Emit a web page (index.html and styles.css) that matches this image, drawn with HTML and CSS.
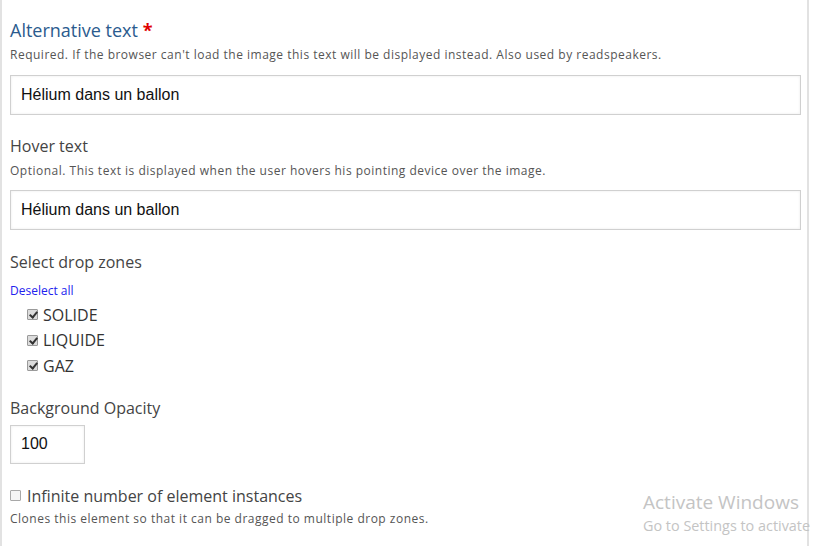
FILE: index.html
```html
<!DOCTYPE html>
<html lang="en">
<head>
    <meta charset="UTF-8">
    <title>Drag and drop element</title>
    <link rel="stylesheet" href="styles.css">
</head>
<body>
<div class="editor-panel">
    <div class="field">
        <label class="field-label required" for="altText">Alternative text <span class="star">*</span></label>
        <div class="field-desc">Required. If the browser can't load the image this text will be displayed instead. Also used by readspeakers.</div>
        <input class="text-input" type="text" id="altText" value="Hélium dans un ballon">
    </div>

    <div class="field">
        <label class="field-label" for="hoverText">Hover text</label>
        <div class="field-desc">Optional. This text is displayed when the user hovers his pointing device over the image.</div>
        <input class="text-input" type="text" id="hoverText" value="Hélium dans un ballon">
    </div>

    <div class="field field-zones">
        <div class="field-label">Select drop zones</div>
        <a class="deselect" href="#">Deselect all</a>
        <ul class="zone-list">
            <li><span class="check checked"></span>SOLIDE</li>
            <li><span class="check checked"></span>LIQUIDE</li>
            <li><span class="check checked"></span>GAZ</li>
        </ul>
    </div>

    <div class="field field-opacity">
        <label class="field-label" for="opacity">Background Opacity</label>
        <input class="text-input small" type="text" id="opacity" value="100">
    </div>

    <div class="field field-multiple">
        <div class="field-label"><span class="check"></span>Infinite number of element instances</div>
        <div class="field-desc">Clones this element so that it can be dragged to multiple drop zones.</div>
    </div>
</div>

<div class="activate">
    <div class="activate-title">Activate Windows</div>
    <div class="activate-sub">Go to Settings to activate</div>
</div>
</body>
</html>
```

FILE: styles.css
```css
html, body {
    margin: 0;
    height: 100%;
    background-color: #fff;
    overflow: hidden;
}

body {
    font-family: "Open Sans", sans-serif;
    color: #444;
    position: relative;
}

.editor-panel {
    width: 787px;
    height: 546px;
    border-left: 2px solid #e2e2e2;
    border-right: 2px solid #e2e2e2;
    padding: 18px 10px 0 8px;
    box-sizing: content-box;
}

.field {
    margin-bottom: 20px;
}

.field-label {
    display: block;
    font-size: 16px;
    line-height: 22px;
    color: #444;
}

.field-label.required {
    font-size: 18px;
    line-height: 24px;
    color: #2b5b8e;
}

.star {
    color: #e00000;
    font-weight: bold;
}

.field-desc {
    font-size: 12px;
    line-height: 18px;
    letter-spacing: 0.5px;
    color: #555;
    margin-top: 4px;
}

.text-input {
    display: block;
    width: 791px;
    height: 40px;
    box-sizing: border-box;
    margin-top: 11px;
    padding: 0 10px;
    border: 1px solid #d0d0d0;
    box-shadow: inset 0 0 3px #ececec;
    font-family: "Liberation Sans", Arial, sans-serif;
    font-size: 16px;
    color: #111;
    background: #fff;
}

.field:nth-child(2) .field-desc {
    margin-top: 5px;
}

.field:nth-child(2) .text-input {
    margin-top: 10px;
}

.field-zones {
    margin-top: 21px;
    margin-bottom: 0;
}

.deselect {
    display: block;
    margin-top: 9px;
    font-size: 12px;
    line-height: 18px;
    color: #2222ee;
    text-decoration: none;
}

.zone-list {
    list-style: none;
    margin: 2px 0 0 0;
    padding: 0 0 0 17px;
}

.zone-list li {
    display: flex;
    align-items: center;
    height: 25.5px;
    font-size: 16px;
    color: #333;
}

.check {
    display: inline-block;
    width: 11px;
    height: 11px;
    box-sizing: border-box;
    border: 1px solid #a8a8a8;
    border-radius: 1px;
    background: #f4f4f4;
    margin-right: 5px;
    flex-shrink: 0;
    position: relative;
}

.check.checked {
    background: #dcdcdc;
    border-color: #9a9a9a;
}

.check.checked::after {
    content: "";
    position: absolute;
    left: 3px;
    top: 0;
    width: 3px;
    height: 6px;
    border-right: 2px solid #333;
    border-bottom: 2px solid #333;
    transform: rotate(40deg);
}

.field-opacity {
    margin-top: 18px;
    margin-bottom: 21px;
}

.field-opacity .text-input {
    width: 75px;
    height: 39px;
    margin-top: 6px;
}

.field-multiple .field-label {
    display: flex;
    align-items: center;
}

.field-multiple .check {
    margin-right: 6px;
}

.field-multiple .field-desc {
    margin-top: 3px;
}

.activate {
    position: absolute;
    left: 643px;
    top: 489px;
    white-space: nowrap;
    color: #c4c4c4;
    font-family: "Open Sans", sans-serif;
}

.activate-title {
    font-size: 19px;
    line-height: 27px;
}

.activate-sub {
    font-size: 14.4px;
    line-height: 20px;
}
```
